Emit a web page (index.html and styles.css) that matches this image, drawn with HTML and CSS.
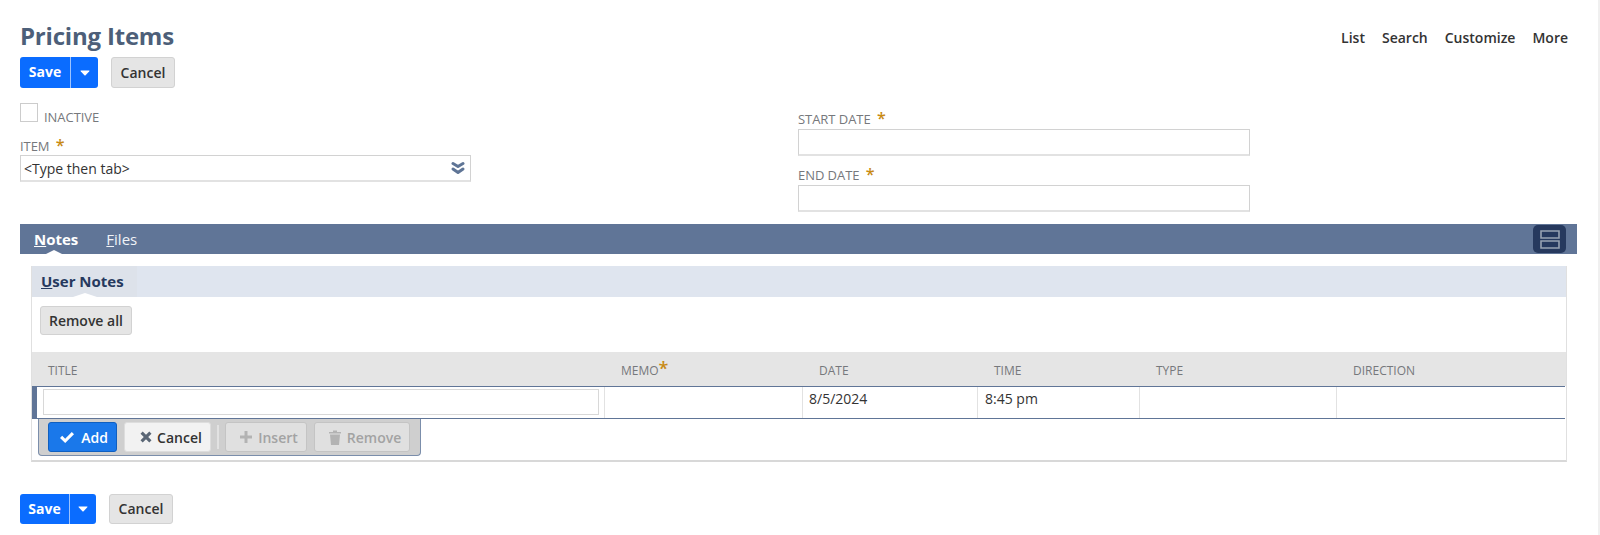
FILE: index.html

```html
<!DOCTYPE html>
<html lang="en">
<head>
    <meta charset="UTF-8">
    <title>Pricing Items</title>
    <link rel="stylesheet" href="styles.css">
</head>
<body>
    <div class="page">
        <div class="title-row">
            <h1>Pricing Items</h1>
            <div class="top-links">
                <a>List</a>
                <a>Search</a>
                <a>Customize</a>
                <a>More</a>
            </div>
        </div>

        <div class="btn-row">
            <div class="save-group">
                <span class="save-btn">Save</span>
                <span class="save-arrow"><svg width="10" height="6" viewBox="0 0 10 6"><path d="M1 0.500h8q1 0 0.300 0.800L5.600 5.200q-0.600 0.600-1.200 0L0.700 1.300Q0 0.500 1 0.500z" fill="#fff"/></svg></span>
            </div>
            <span class="btn cancel-btn">Cancel</span>
        </div>

        <div class="form">
            <div class="form-col">
                <div class="check-row">
                    <span class="checkbox"></span>
                    <span class="label">INACTIVE</span>
                </div>
                <div class="label item-label">ITEM <span class="star">*</span></div>
                <div class="input item-input">
                    &lt;Type then tab&gt;
                    <svg width="14" height="14" viewBox="0 0 14 14"><path d="M2 2.500l5 3 5-3M2 8l5 3.500 5-3.500" fill="none" stroke="#5f7596" stroke-width="3" stroke-linecap="round" stroke-linejoin="round"/></svg>
                </div>
            </div>
            <div class="form-col date-col">
                <div class="label">START DATE <span class="star">*</span></div>
                <div class="input date-input"></div>
                <div class="label end-label">END DATE <span class="star">*</span></div>
                <div class="input date-input"></div>
            </div>
        </div>

        <div class="tab-bar">
            <span class="tab active"><u>N</u>otes</span>
            <span class="tab"><u>F</u>iles</span>
            <span class="layout-btn"><svg width="20" height="19" viewBox="0 0 20 19"><path d="M1 1h18v7H1zM1 11h18v7H1z" fill="none" stroke="#98a2b2" stroke-width="1.600"/></svg></span>
        </div>

        <div class="notes-box">
            <div class="sub-tabs">
                <span class="sub-tab"><u>U</u>ser Notes</span>
            </div>
            <div class="notes-actions">
                <span class="btn">Remove all</span>
            </div>
            <div class="grid-head">
                <span class="col col-title">TITLE</span>
                <span class="col col-memo">MEMO<span class="star">*</span></span>
                <span class="col col-date">DATE</span>
                <span class="col col-time">TIME</span>
                <span class="col col-type">TYPE</span>
                <span class="col col-dir">DIRECTION</span>
            </div>
            <div class="grid-row">
                <div class="cell col-title"><div class="title-input"></div></div>
                <div class="cell col-memo"></div>
                <div class="cell col-date">8/5/2024</div>
                <div class="cell col-time">8:45 pm</div>
                <div class="cell col-type"></div>
                <div class="cell col-dir"></div>
            </div>
            <div class="row-tools">
                <span class="tool tool-add"><svg width="16" height="13" viewBox="0 0 16 13"><path d="M1 7l2.200-2.200 3 3L12.800 1 15 3.200 6.200 12z" fill="#fff"/></svg>Add</span>
                <span class="tool tool-cancel"><svg width="12" height="12" viewBox="0 0 12 12"><path d="M0.500 2.700L2.700 0.500 6 3.800 9.300 0.500l2.200 2.200L8.200 6l3.300 3.300-2.200 2.200L6 8.200l-3.300 3.300-2.200-2.200L3.800 6z" fill="#5a6675"/></svg>Cancel</span>
                <span class="tool-sep"></span>
                <span class="tool tool-off tool-insert"><svg width="12" height="12" viewBox="0 0 12 12"><path d="M4.500 0h3v4.500H12v3H7.500V12h-3V7.500H0v-3h4.500z" fill="#b3b3b3"/></svg>Insert</span>
                <span class="tool tool-off tool-remove"><svg width="12" height="15" viewBox="0 0 12 15"><path d="M0 2h4V0.500h4V2h4v1.500H0zM1 4.500h10L10 15H2z" fill="#b3b3b3"/></svg>Remove</span>
            </div>
        </div>

        <div class="btn-row bottom-row">
            <div class="save-group">
                <span class="save-btn">Save</span>
                <span class="save-arrow"><svg width="10" height="6" viewBox="0 0 10 6"><path d="M1 0.500h8q1 0 0.300 0.800L5.600 5.200q-0.600 0.600-1.200 0L0.700 1.300Q0 0.500 1 0.500z" fill="#fff"/></svg></span>
            </div>
            <span class="btn cancel-btn">Cancel</span>
        </div>
    </div>
</body>
</html>
```

FILE: styles.css

```css
* {
    box-sizing: border-box;
}
html, body {
    height: 535px;
    overflow: hidden;
}
body {
    margin: 0;
    background-color: #fff;
    font-family: "Open Sans", sans-serif;
    font-size: 14px;
    color: #333;
}
.page {
    height: 535px;
    padding: 18px 0 0 20px;
    border-right: 2px solid #f0f0f0;
}
.title-row {
    display: flex;
    justify-content: space-between;
    width: 1548px;
    height: 39px;
}
h1 {
    margin: 0;
    font-size: 24px;
    line-height: 36px;
    font-weight: 700;
    letter-spacing: -0.2px;
    color: #4d5f79;
}
.top-links {
    display: flex;
    gap: 17px;
    padding: 10px 0 0 0;
    font-size: 14px;
    line-height: 20px;
    font-weight: 600;
    color: #333;
}
.btn-row {
    display: flex;
    gap: 13px;
    height: 31px;
}
.save-group {
    display: flex;
    height: 100%;
    border-radius: 3px;
    overflow: hidden;
    color: #fff;
    font-weight: 700;
    background-color: #0a6cff;
}
.save-btn {
    width: 50px;
    text-align: center;
    line-height: 30px;
}
.save-arrow {
    width: 28px;
    display: flex;
    align-items: center;
    justify-content: center;
    border-left: 1px solid #9cc3ff;
}
.btn {
    display: inline-block;
    height: 31px;
    line-height: 29px;
    text-align: center;
    font-weight: 600;
    background-color: #e5e5e5;
    border: 1px solid #d2d2d2;
    border-radius: 3px;
    color: #333;
}
.cancel-btn {
    width: 64px;
}
.form {
    display: flex;
    height: 136px;
}
.form-col {
    width: 778px;
}
.check-row {
    display: flex;
    align-items: flex-end;
    gap: 6px;
    padding-top: 15px;
}
.checkbox {
    width: 18px;
    height: 19px;
    border: 1px solid #ccc;
}
.label {
    font-size: 13px;
    line-height: 16px;
    letter-spacing: -0.05px;
    color: #76787c;
}
.check-row .label {
    position: relative;
    top: 3px;
}
.star {
    color: #c88a14;
    font-size: 16px;
    font-weight: 600;
    line-height: 14px;
    margin-left: 3px;
}
.item-label {
    margin-top: 16px;
}
.input {
    border: 1px solid #d2d2d2;
    border-bottom: 2px solid #e2e2e2;
    background-color: #fff;
}
.item-input {
    display: flex;
    justify-content: space-between;
    align-items: center;
    width: 451px;
    height: 27px;
    margin-top: 1px;
    padding: 0 5px 0 3px;
    color: #333;
}
.date-col {
    padding-top: 23px;
}
.date-input {
    width: 452px;
    height: 27px;
    margin-top: 2px;
}
.end-label {
    margin-top: 11px;
}
.tab-bar {
    display: flex;
    align-items: center;
    height: 30px;
    background-color: #607597;
    padding-left: 14px;
    gap: 28px;
    width: 1557px;
}
.tab {
    font-size: 15px;
    line-height: 30px;
    color: #f0f3f7;
    position: relative;
}
.tab.active {
    font-weight: 700;
    color: #fff;
}
.tab.active::after {
    content: "";
    position: absolute;
    left: 12px;
    bottom: 0;
    border-left: 8px solid transparent;
    border-right: 8px solid transparent;
    border-bottom: 4px solid #fff;
}
.layout-btn {
    display: flex;
    align-items: center;
    justify-content: center;
    width: 33px;
    height: 28px;
    margin-left: auto;
    margin-right: 11px;
    border-radius: 5px;
    background-color: #26395e;
}
.notes-box {
    width: 1536px;
    height: 196px;
    margin: 12px 0 0 11px;
    border: 1px solid #e0e0e0;
    border-bottom: 2px solid #d8d8d8;
    border-top: 0;
}
.sub-tabs {
    height: 31px;
    background-color: #dfe5ef;
}
.sub-tab {
    display: inline-block;
    position: relative;
    width: 105px;
    height: 31px;
    padding-left: 9px;
    line-height: 31px;
    font-size: 15px;
    font-weight: 700;
    color: #26395e;
    background-color: #dde2ea;
}
.sub-tab::after {
    content: "";
    position: absolute;
    left: 41px;
    bottom: 0;
    border-left: 12px solid transparent;
    border-right: 12px solid transparent;
    border-bottom: 4px solid #fff;
}
.notes-actions {
    height: 55px;
    padding: 9px 0 0 8px;
}
.notes-actions .btn {
    width: 92px;
    height: 29px;
    line-height: 27px;
}
.grid-head {
    display: flex;
    height: 34px;
    background-color: #e5e5e5;
    font-size: 12px;
    line-height: 37px;
    color: #76787c;
}
.grid-row {
    display: flex;
    height: 33px;
    border-top: 1px solid #607597;
    border-bottom: 1px solid #607597;
    border-left: 5px solid #607597;
    font-size: 14px;
    margin-right: 1px;
}
.col-title {
    width: 567px;
}
.col-memo {
    width: 198px;
}
.col-date {
    width: 175px;
}
.col-time {
    width: 162px;
}
.col-type {
    width: 197px;
}
.col-dir {
    flex: 1;
}
.grid-head .col {
    padding-left: 17px;
}
.grid-head .col-title {
    width: 572px;
    padding-left: 16px;
}
.grid-head .star {
    font-size: 18px;
    margin-left: 0;
}
.cell {
    border-left: 1px solid #e2e2e2;
    padding: 1px 6px;
    line-height: 22px;
}
.col-time.cell {
    padding-left: 7px;
}
.cell.col-title {
    border-left: 0;
    padding: 2px 5px 0 6px;
}
.title-input {
    height: 26px;
    border: 1px solid #d8d8d8;
}
.row-tools {
    display: inline-flex;
    align-items: center;
    gap: 7px;
    margin-left: 6px;
    padding: 0 10px 0 9px;
    height: 37px;
    background-color: #cfcfcf;
    border: 1px solid #7b8eab;
    border-top: 0;
    border-radius: 0 0 4px 4px;
}
.tool {
    display: flex;
    align-items: center;
    justify-content: center;
    gap: 6px;
    height: 30px;
    font-weight: 600;
    border-radius: 3px;
}
.tool-add {
    width: 69px;
    padding-left: 2px;
    color: #fff;
    background-color: #1a78ea;
    border: 1px solid #0f5fc0;
}
.tool-cancel {
    width: 87px;
    padding-left: 7px;
    gap: 5px;
    color: #333;
    background-color: #f2f2f2;
    border: 1px solid #ddd;
}
.tool-sep {
    width: 2px;
    height: 24px;
    background-color: #e2e2e2;
    margin: 0 -1px;
}
.tool-off {
    padding-left: 6px;
    color: #a3a3a3;
    background-color: #e0e0e0;
    border: 1px solid #c4c4c4;
}
.tool-insert {
    width: 82px;
}
.tool-remove {
    width: 96px;
}
.bottom-row {
    height: 30px;
    margin-top: 32px;
}
.bottom-row .btn {
    height: 30px;
    line-height: 28px;
}
.bottom-row .save-btn {
    width: 49px;
    line-height: 29px;
}
.bottom-row .save-arrow {
    width: 27px;
}
```
